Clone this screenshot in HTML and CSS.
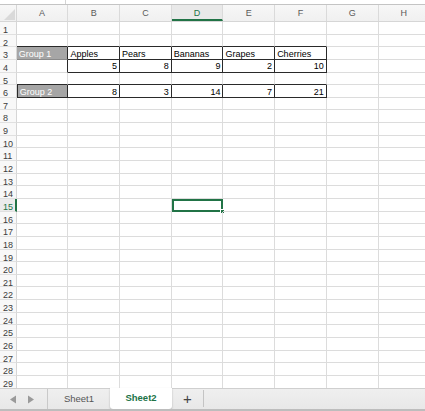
FILE: index.html
```html
<!DOCTYPE html>
<html>
<head>
<meta charset="utf-8">
<link rel="stylesheet" href="styles.css">
</head>
<body>
<div class="app">
  <div class="topstrip"><span class="tickline"></span></div>
  <div class="colheads">
    <div class="corner"><span class="tri"></span></div>
    <div class="ch">A</div><div class="ch">B</div><div class="ch">C</div><div class="ch active">D</div><div class="ch">E</div><div class="ch">F</div><div class="ch">G</div><div class="ch">H</div>
  </div>
  <div class="grid">
    <div class="row"><div class="rh">1</div><div class="c"></div><div class="c"></div><div class="c"></div><div class="c"></div><div class="c"></div><div class="c"></div><div class="c"></div><div class="c"></div></div>
    <div class="row"><div class="rh">2</div><div class="c bb"></div><div class="c bb"></div><div class="c bb"></div><div class="c bb"></div><div class="c bb"></div><div class="c bb"></div><div class="c"></div><div class="c"></div></div>
    <div class="row"><div class="rh">3</div><div class="c group">Group 1</div><div class="c bb br">Apples</div><div class="c bb br">Pears</div><div class="c bb br">Bananas</div><div class="c bb br">Grapes</div><div class="c bb br">Cherries</div><div class="c"></div><div class="c"></div></div>
    <div class="row"><div class="rh">4</div><div class="c br"></div><div class="c bb br num">5</div><div class="c bb br num">8</div><div class="c bb br num">9</div><div class="c bb br num">2</div><div class="c bb br num">10</div><div class="c"></div><div class="c"></div></div>
    <div class="row"><div class="rh">5</div><div class="c bb"></div><div class="c bb"></div><div class="c bb"></div><div class="c bb"></div><div class="c bb"></div><div class="c bb"></div><div class="c"></div><div class="c"></div></div>
    <div class="row"><div class="rh">6</div><div class="c group g2">Group 2</div><div class="c bb br num">8</div><div class="c bb br num">3</div><div class="c bb br num">14</div><div class="c bb br num">7</div><div class="c bb br num">21</div><div class="c"></div><div class="c"></div></div>
    <div class="row"><div class="rh">7</div><div class="c"></div><div class="c"></div><div class="c"></div><div class="c"></div><div class="c"></div><div class="c"></div><div class="c"></div><div class="c"></div></div>
    <div class="row"><div class="rh">8</div><div class="c"></div><div class="c"></div><div class="c"></div><div class="c"></div><div class="c"></div><div class="c"></div><div class="c"></div><div class="c"></div></div>
    <div class="row"><div class="rh">9</div><div class="c"></div><div class="c"></div><div class="c"></div><div class="c"></div><div class="c"></div><div class="c"></div><div class="c"></div><div class="c"></div></div>
    <div class="row"><div class="rh">10</div><div class="c"></div><div class="c"></div><div class="c"></div><div class="c"></div><div class="c"></div><div class="c"></div><div class="c"></div><div class="c"></div></div>
    <div class="row"><div class="rh">11</div><div class="c"></div><div class="c"></div><div class="c"></div><div class="c"></div><div class="c"></div><div class="c"></div><div class="c"></div><div class="c"></div></div>
    <div class="row"><div class="rh">12</div><div class="c"></div><div class="c"></div><div class="c"></div><div class="c"></div><div class="c"></div><div class="c"></div><div class="c"></div><div class="c"></div></div>
    <div class="row"><div class="rh">13</div><div class="c"></div><div class="c"></div><div class="c"></div><div class="c"></div><div class="c"></div><div class="c"></div><div class="c"></div><div class="c"></div></div>
    <div class="row"><div class="rh">14</div><div class="c"></div><div class="c"></div><div class="c"></div><div class="c"></div><div class="c"></div><div class="c"></div><div class="c"></div><div class="c"></div></div>
    <div class="row"><div class="rh active">15</div><div class="c"></div><div class="c"></div><div class="c"></div><div class="c sel"><span class="handle"></span></div><div class="c"></div><div class="c"></div><div class="c"></div><div class="c"></div></div>
    <div class="row"><div class="rh">16</div><div class="c"></div><div class="c"></div><div class="c"></div><div class="c"></div><div class="c"></div><div class="c"></div><div class="c"></div><div class="c"></div></div>
    <div class="row"><div class="rh">17</div><div class="c"></div><div class="c"></div><div class="c"></div><div class="c"></div><div class="c"></div><div class="c"></div><div class="c"></div><div class="c"></div></div>
    <div class="row"><div class="rh">18</div><div class="c"></div><div class="c"></div><div class="c"></div><div class="c"></div><div class="c"></div><div class="c"></div><div class="c"></div><div class="c"></div></div>
    <div class="row"><div class="rh">19</div><div class="c"></div><div class="c"></div><div class="c"></div><div class="c"></div><div class="c"></div><div class="c"></div><div class="c"></div><div class="c"></div></div>
    <div class="row"><div class="rh">20</div><div class="c"></div><div class="c"></div><div class="c"></div><div class="c"></div><div class="c"></div><div class="c"></div><div class="c"></div><div class="c"></div></div>
    <div class="row"><div class="rh">21</div><div class="c"></div><div class="c"></div><div class="c"></div><div class="c"></div><div class="c"></div><div class="c"></div><div class="c"></div><div class="c"></div></div>
    <div class="row"><div class="rh">22</div><div class="c"></div><div class="c"></div><div class="c"></div><div class="c"></div><div class="c"></div><div class="c"></div><div class="c"></div><div class="c"></div></div>
    <div class="row"><div class="rh">23</div><div class="c"></div><div class="c"></div><div class="c"></div><div class="c"></div><div class="c"></div><div class="c"></div><div class="c"></div><div class="c"></div></div>
    <div class="row"><div class="rh">24</div><div class="c"></div><div class="c"></div><div class="c"></div><div class="c"></div><div class="c"></div><div class="c"></div><div class="c"></div><div class="c"></div></div>
    <div class="row"><div class="rh">25</div><div class="c"></div><div class="c"></div><div class="c"></div><div class="c"></div><div class="c"></div><div class="c"></div><div class="c"></div><div class="c"></div></div>
    <div class="row"><div class="rh">26</div><div class="c"></div><div class="c"></div><div class="c"></div><div class="c"></div><div class="c"></div><div class="c"></div><div class="c"></div><div class="c"></div></div>
    <div class="row"><div class="rh">27</div><div class="c"></div><div class="c"></div><div class="c"></div><div class="c"></div><div class="c"></div><div class="c"></div><div class="c"></div><div class="c"></div></div>
    <div class="row"><div class="rh">28</div><div class="c"></div><div class="c"></div><div class="c"></div><div class="c"></div><div class="c"></div><div class="c"></div><div class="c"></div><div class="c"></div></div>
    <div class="row"><div class="rh">29</div><div class="c"></div><div class="c"></div><div class="c"></div><div class="c"></div><div class="c"></div><div class="c"></div><div class="c"></div><div class="c"></div></div>
  </div>
  <div class="tabbar">
    <div class="nav">
      <svg width="8" height="9" viewBox="0 0 8 9"><path d="M7 0.5 L1 4.5 L7 8.5 Z" fill="#9a9a9a"/></svg>
      <svg width="8" height="9" viewBox="0 0 8 9"><path d="M1 0.5 L7 4.5 L1 8.5 Z" fill="#9a9a9a"/></svg>
    </div>
    <div class="tab">Sheet1</div>
    <div class="tab current">Sheet2</div>
    <div class="add">+</div>
    <div class="sep"></div>
  </div>
  <div class="bottomline"></div>
</div>
</body>
</html>
```
FILE: styles.css
```css
* { box-sizing: border-box; }
html, body { margin: 0; padding: 0; background: #ffffff; }
body { font-family: "Liberation Sans", Arial, sans-serif; }
.app { width: 425px; height: 411px; overflow: hidden; display: flex; flex-direction: column; }

.topstrip { height: 5px; flex: none; background: #ffffff; border-bottom: 1px solid #c4c4c4; position: relative; }
.tickline { position: absolute; left: 65px; top: 0; width: 1px; height: 4px; background: #d4d4d4; }

.colheads { height: 17px; flex: none; display: flex; background: linear-gradient(#f7f7f7, #f0f0f0); border-bottom: 1px solid #d6d6d6; }
.corner { width: 16.7px; flex: none; border-right: 1px solid #d6d6d6; position: relative; }
.tri { position: absolute; right: 1px; bottom: 1px; width: 0; height: 0; border-left: 11px solid transparent; border-bottom: 11px solid #d9d9d9; }
.ch { width: 51.7px; flex: none; border-right: 1px solid #dadada; font-size: 9px; color: #5a5a5a; text-align: center; line-height: 17px; }
.ch.active { background: #e9e9e9; color: #217346; border-bottom: 2px solid #217346; }

.grid { height: 366px; flex: none; overflow: hidden; }
.row { height: 12.65px; display: flex; }
.rh { width: 16.7px; flex: none; border-right: 1px solid #d6d6d6; border-bottom: 1px solid #e0e0e0; background: #f8f8f8; font-size: 9px; color: #3c3c3c; line-height: 12px; padding: 2px 0 0 3px; overflow: hidden; }
.rh.active { color: #217346; border-right: 2px solid #217346; background: #ececec; }
.c { width: 51.7px; flex: none; border-right: 1px solid #dcdcdc; border-bottom: 1px solid #dcdcdc; font-size: 9px; color: #000000; line-height: 11px; padding: 1.5px 2px 0; white-space: nowrap; overflow: visible; position: relative; }
.c.bb { border-bottom-color: #2a2a2a; }
.c.br { border-right-color: #2a2a2a; }
.c.num { text-align: right; }
.c.group { background: #a6a6a6; color: #ffffff; border-right-color: #2a2a2a; border-bottom-color: #8a8a8a; }
.c.g2 { border-bottom-color: #2a2a2a; border-left: 1px solid #2a2a2a; }
.c.sel { border: 2px solid #217346; }
.handle { position: absolute; right: -4px; bottom: -4px; width: 5px; height: 5px; background: #217346; border: 1px solid #ffffff; }

.tabbar { height: 21px; flex: none; display: flex; align-items: stretch; background: linear-gradient(#efefef, #e8e8e8); border-top: 1px solid #cfcfcf; }
.nav { width: 47px; flex: none; display: flex; align-items: center; gap: 10px; padding-left: 9px; }
.tab { width: 63px; flex: none; border-left: 1px solid #c9c9c9; font-size: 9.5px; color: #555555; text-align: center; line-height: 19px; }
.tab.current { width: 62px; background: #ffffff; color: #217346; font-weight: bold; border-left: none; margin-top: -1px; border-radius: 0 0 3px 3px; box-shadow: 0 1px 2px rgba(0,0,0,0.25); }
.add { width: 31px; flex: none; font-size: 15px; color: #444444; text-align: center; line-height: 19px; }
.sep { width: 1px; flex: none; background: #c4c4c4; margin: 1px 0 2px; }
.bottomline { height: 2px; flex: none; background: #bdbdbd; }
```
